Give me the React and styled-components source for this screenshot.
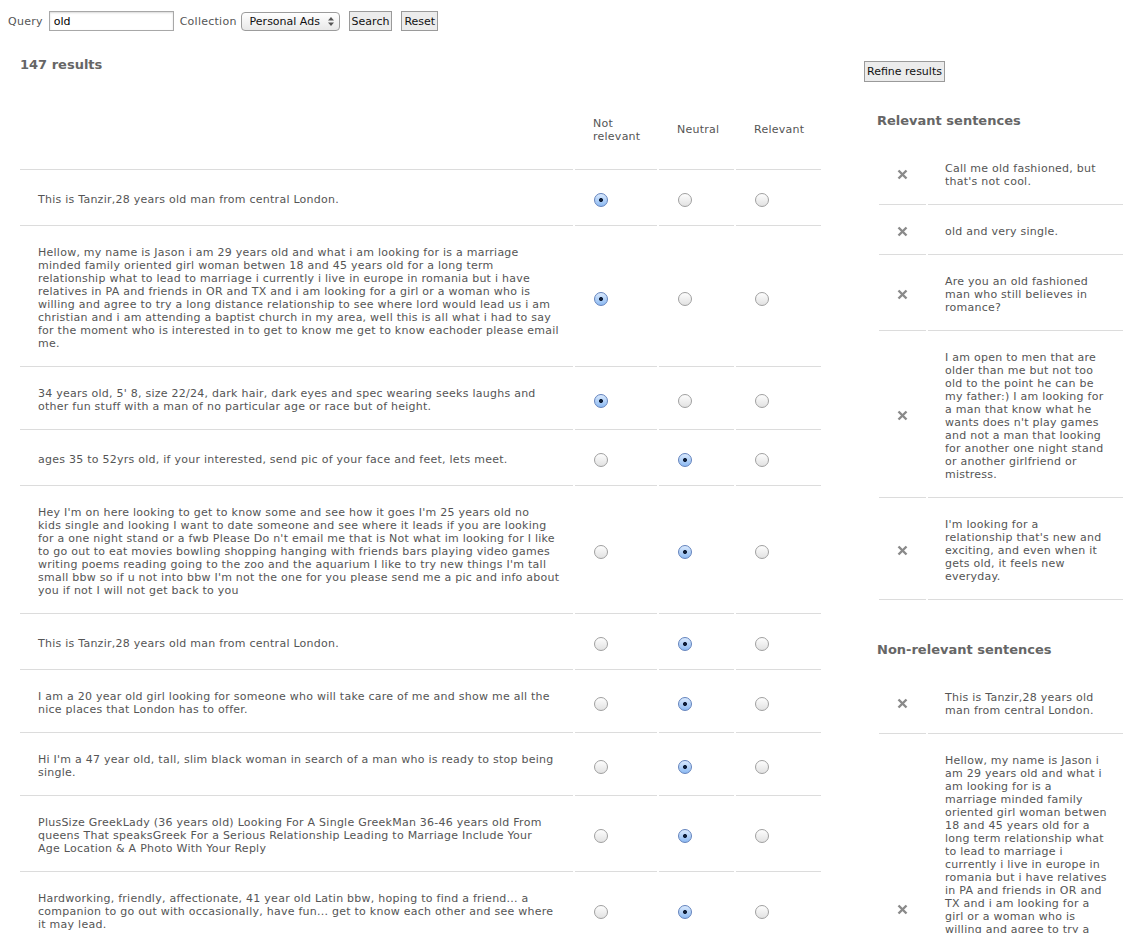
import React from 'react';
import styled, { createGlobalStyle } from 'styled-components';

const GlobalStyle = createGlobalStyle`
  body {
    margin: 8px;
    background: #fff;
    color: #555;
    font-family: "DejaVu Sans", Verdana, sans-serif;
    font-size: 11px;
    letter-spacing: 0.25px;
  }
`;

const SearchForm = styled.form`
  display: flex;
  align-items: center;
  height: 26px;
`;

const Label = styled.label`
  margin-right: ${p => p.$gap || 6}px;
`;

const QueryInput = styled.input`
  box-sizing: border-box;
  width: 125px;
  height: 20px;
  margin: 0 6px 0 0;
  padding: 0 4px;
  border: 1px solid #a8a8a8;
  box-shadow: inset 0 1px 2px rgba(0, 0, 0, 0.15);
  font: 11px "DejaVu Sans", Verdana, sans-serif;
  color: #000;
`;

const SelectWrap = styled.div`
  position: relative;
  margin-right: 9px;
`;

const Select = styled.select`
  appearance: none;
  box-sizing: border-box;
  width: 99px;
  height: 19px;
  padding: 0 0 0 8px;
  border: 1px solid #9c9c9c;
  border-radius: 4px;
  background: linear-gradient(#ffffff, #e8e8e8);
  font: 11px "DejaVu Sans", Verdana, sans-serif;
  color: #111;
`;

const SelectArrows = styled.svg`
  position: absolute;
  right: 6px;
  top: 5px;
  pointer-events: none;
`;

const Button = styled.button`
  box-sizing: border-box;
  height: 20px;
  margin-right: ${p => p.$gap || 0}px;
  padding: 0 2px;
  border: 1px solid #9a9a9a;
  border-radius: 0;
  background: #ececec;
  font: 11px "DejaVu Sans", Verdana, sans-serif;
  letter-spacing: 0;
  color: #111;
`;

const Columns = styled.div`
  display: flex;
  align-items: flex-start;
  margin-top: 21px;
`;

const Main = styled.div`
  margin-left: 10px;
`;

const Title = styled.h3`
  margin: 0 0 13px 2px;
  font-size: 13px;
  line-height: 20px;
  font-weight: bold;
  letter-spacing: 0;
  color: #666;
`;

const ResultsTable = styled.table`
  border-collapse: separate;
  border-spacing: 2px 0;
  table-layout: fixed;
  width: 805px;
`;

const HeadCell = styled.th`
  box-sizing: border-box;
  width: ${p => p.$width}px;
  height: 82px;
  padding: 2px 0 0 18px;
  border-bottom: 1px solid #dcdcdc;
  text-align: left;
  vertical-align: middle;
  font-weight: normal;
  line-height: 13px;
`;

const TextCell = styled.td`
  padding: 20px 18px 16px 18px;
  border-bottom: 1px solid #dcdcdc;
  vertical-align: middle;
  line-height: 13px;
  white-space: nowrap;
`;

const RadioCell = styled.td`
  padding: 20px 0 16px 19px;
  border-bottom: 1px solid #dcdcdc;
  vertical-align: middle;
`;

const Radio = styled.input.attrs({ type: 'radio', readOnly: true })`
  appearance: none;
  display: block;
  box-sizing: border-box;
  width: 14px;
  height: 14px;
  margin: 3px 0 2px;
  border: 1px solid #a0a0a0;
  border-radius: 50%;
  background: linear-gradient(#fdfdfd, #e2e2e2);

  &:checked {
    border-color: #6383bd;
    background:
      radial-gradient(circle, #0f1e38 0 1.7px, transparent 2.3px),
      linear-gradient(#d9e9fd, #8dbaf2);
  }
`;

const Line = styled.span`
  display: block;
`;

const Sidebar = styled.aside`
  width: 265px;
  margin-left: 41px;
  padding-top: 6px;
`;

const RefineButton = styled(Button)`
  height: 21px;
`;

const Section = styled.section`
  padding-left: 13px;
  margin-top: ${p => p.$top}px;
`;

const SectionTitle = styled(Title)`
  margin: 0 0 13px;
  line-height: 16px;
`;

const SentenceTable = styled.table`
  border-collapse: separate;
  border-spacing: 2px 0;
  table-layout: fixed;
  width: 248px;
`;

const RemoveCell = styled.td`
  box-sizing: border-box;
  width: 47px;
  padding-top: 4px;
  border-bottom: 1px solid #dcdcdc;
  text-align: center;
  vertical-align: middle;
`;

const SentenceCell = styled.td`
  box-sizing: border-box;
  width: 195px;
  padding: 20px 10px 16px 17px;
  border-bottom: 1px solid #dcdcdc;
  vertical-align: middle;
  line-height: 13px;
  white-space: nowrap;
`;

const RemoveIcon = () => (
  <svg width="11" height="11" viewBox="0 0 11 11" style={{ display: 'block', margin: '0 auto' }}>
    <path d="M1.5 1.5 L9.5 9.5 M9.5 1.5 L1.5 9.5" stroke="#8a8a8a" strokeWidth="2.4" />
  </svg>
);

const Lines = ({ lines }) => lines.map((l, i) => <Line key={i}>{l}</Line>);

const tanzir = ['This is Tanzir,28 years old man from central London.'];

const results = [
  { lines: tanzir, choice: 0 },
  {
    lines: [
      'Hellow, my name is Jason i am 29 years old and what i am looking for is a marriage',
      'minded family oriented girl woman betwen 18 and 45 years old for a long term',
      'relationship what to lead to marriage i currently i live in europe in romania but i have',
      'relatives in PA and friends in OR and TX and i am looking for a girl or a woman who is',
      'willing and agree to try a long distance relationship to see where lord would lead us i am',
      'christian and i am attending a baptist church in my area, well this is all what i had to say',
      'for the moment who is interested in to get to know me get to know eachoder please email',
      'me.',
    ],
    choice: 0,
  },
  {
    lines: [
      "34 years old, 5' 8, size 22/24, dark hair, dark eyes and spec wearing seeks laughs and",
      'other fun stuff with a man of no particular age or race but of height.',
    ],
    choice: 0,
  },
  { lines: ['ages 35 to 52yrs old, if your interested, send pic of your face and feet, lets meet.'], choice: 1 },
  {
    lines: [
      "Hey I'm on here looking to get to know some and see how it goes I'm 25 years old no",
      'kids single and looking I want to date someone and see where it leads if you are looking',
      "for a one night stand or a fwb Please Do n't email me that is Not what im looking for I like",
      'to go out to eat movies bowling shopping hanging with friends bars playing video games',
      "writing poems reading going to the zoo and the aquarium I like to try new things I'm tall",
      "small bbw so if u not into bbw I'm not the one for you please send me a pic and info about",
      'you if not I will not get back to you',
    ],
    choice: 1,
  },
  { lines: tanzir, choice: 1 },
  {
    lines: [
      'I am a 20 year old girl looking for someone who will take care of me and show me all the',
      'nice places that London has to offer.',
    ],
    choice: 1,
  },
  {
    lines: [
      "Hi I'm a 47 year old, tall, slim black woman in search of a man who is ready to stop being",
      'single.',
    ],
    choice: 1,
  },
  {
    lines: [
      'PlusSize GreekLady (36 years old) Looking For A Single GreekMan 36-46 years old From',
      'queens That speaksGreek For a Serious Relationship Leading to Marriage Include Your',
      'Age Location & A Photo With Your Reply',
    ],
    choice: 1,
  },
  {
    lines: [
      'Hardworking, friendly, affectionate, 41 year old Latin bbw, hoping to find a friend... a',
      'companion to go out with occasionally, have fun... get to know each other and see where',
      'it may lead.',
    ],
    choice: 1,
  },
];

const relevant = [
  ['Call me old fashioned, but', "that's not cool."],
  ['old and very single.'],
  ['Are you an old fashioned', 'man who still believes in', 'romance?'],
  [
    'I am open to men that are',
    'older than me but not too',
    'old to the point he can be',
    'my father:) I am looking for',
    'a man that know what he',
    "wants does n't play games",
    'and not a man that looking',
    'for another one night stand',
    'or another girlfriend or',
    'mistress.',
  ],
  ["I'm looking for a", "relationship that's new and", 'exciting, and even when it', 'gets old, it feels new', 'everyday.'],
];

const nonRelevant = [
  ['This is Tanzir,28 years old', 'man from central London.'],
  [
    'Hellow, my name is Jason i',
    'am 29 years old and what i',
    'am looking for is a',
    'marriage minded family',
    'oriented girl woman betwen',
    '18 and 45 years old for a',
    'long term relationship what',
    'to lead to marriage i',
    'currently i live in europe in',
    'romania but i have relatives',
    'in PA and friends in OR and',
    'TX and i am looking for a',
    'girl or a woman who is',
    'willing and agree to try a',
    'long distance relationship to',
    'see where lord would lead us',
    'i am christian and i am',
    'attending a baptist church in',
    'my area, well this is all',
    'what i had to say for the',
    'moment who is interested in',
    'to get to know me get to',
    'know eachoder please email',
    'me.',
  ],
];

const SentenceList = ({ items }) => (
  <SentenceTable>
    <tbody>
      {items.map((lines, i) => (
        <tr key={i}>
          <RemoveCell>
            <RemoveIcon />
          </RemoveCell>
          <SentenceCell>
            <Lines lines={lines} />
          </SentenceCell>
        </tr>
      ))}
    </tbody>
  </SentenceTable>
);

const App = () => {
  return (
    <>
      <GlobalStyle />
      <SearchForm onSubmit={e => e.preventDefault()}>
        <Label htmlFor="q">Query</Label>
        <QueryInput id="q" defaultValue="old" />
        <Label htmlFor="c" $gap={4}>Collection</Label>
        <SelectWrap>
          <Select id="c" defaultValue="ads">
            <option value="ads">Personal Ads</option>
          </Select>
          <SelectArrows width="6" height="9" viewBox="0 0 6 9">
            <path d="M3 0 L6 3.5 H0 Z M3 9 L6 5.5 H0 Z" fill="#555" />
          </SelectArrows>
        </SelectWrap>
        <Button $gap={9}>Search</Button>
        <Button type="button">Reset</Button>
      </SearchForm>

      <Columns>
        <Main>
          <Title>147 results</Title>
          <ResultsTable>
            <thead>
              <tr>
                <HeadCell $width={553} />
                <HeadCell $width={82}>Not<br />relevant</HeadCell>
                <HeadCell $width={75}>Neutral</HeadCell>
                <HeadCell $width={85}>Relevant</HeadCell>
              </tr>
            </thead>
            <tbody>
              {results.map((r, i) => (
                <tr key={i}>
                  <TextCell>
                    <Lines lines={r.lines} />
                  </TextCell>
                  {[0, 1, 2].map(c => (
                    <RadioCell key={c}>
                      <Radio name={`r${i}`} checked={r.choice === c} />
                    </RadioCell>
                  ))}
                </tr>
              ))}
            </tbody>
          </ResultsTable>
        </Main>

        <Sidebar>
          <RefineButton>Refine results</RefineButton>
          <Section $top={31}>
            <SectionTitle>Relevant sentences</SectionTitle>
            <SentenceList items={relevant} />
          </Section>
          <Section $top={42}>
            <SectionTitle>Non-relevant sentences</SectionTitle>
            <SentenceList items={nonRelevant} />
          </Section>
        </Sidebar>
      </Columns>
    </>
  );
};

export default App;
